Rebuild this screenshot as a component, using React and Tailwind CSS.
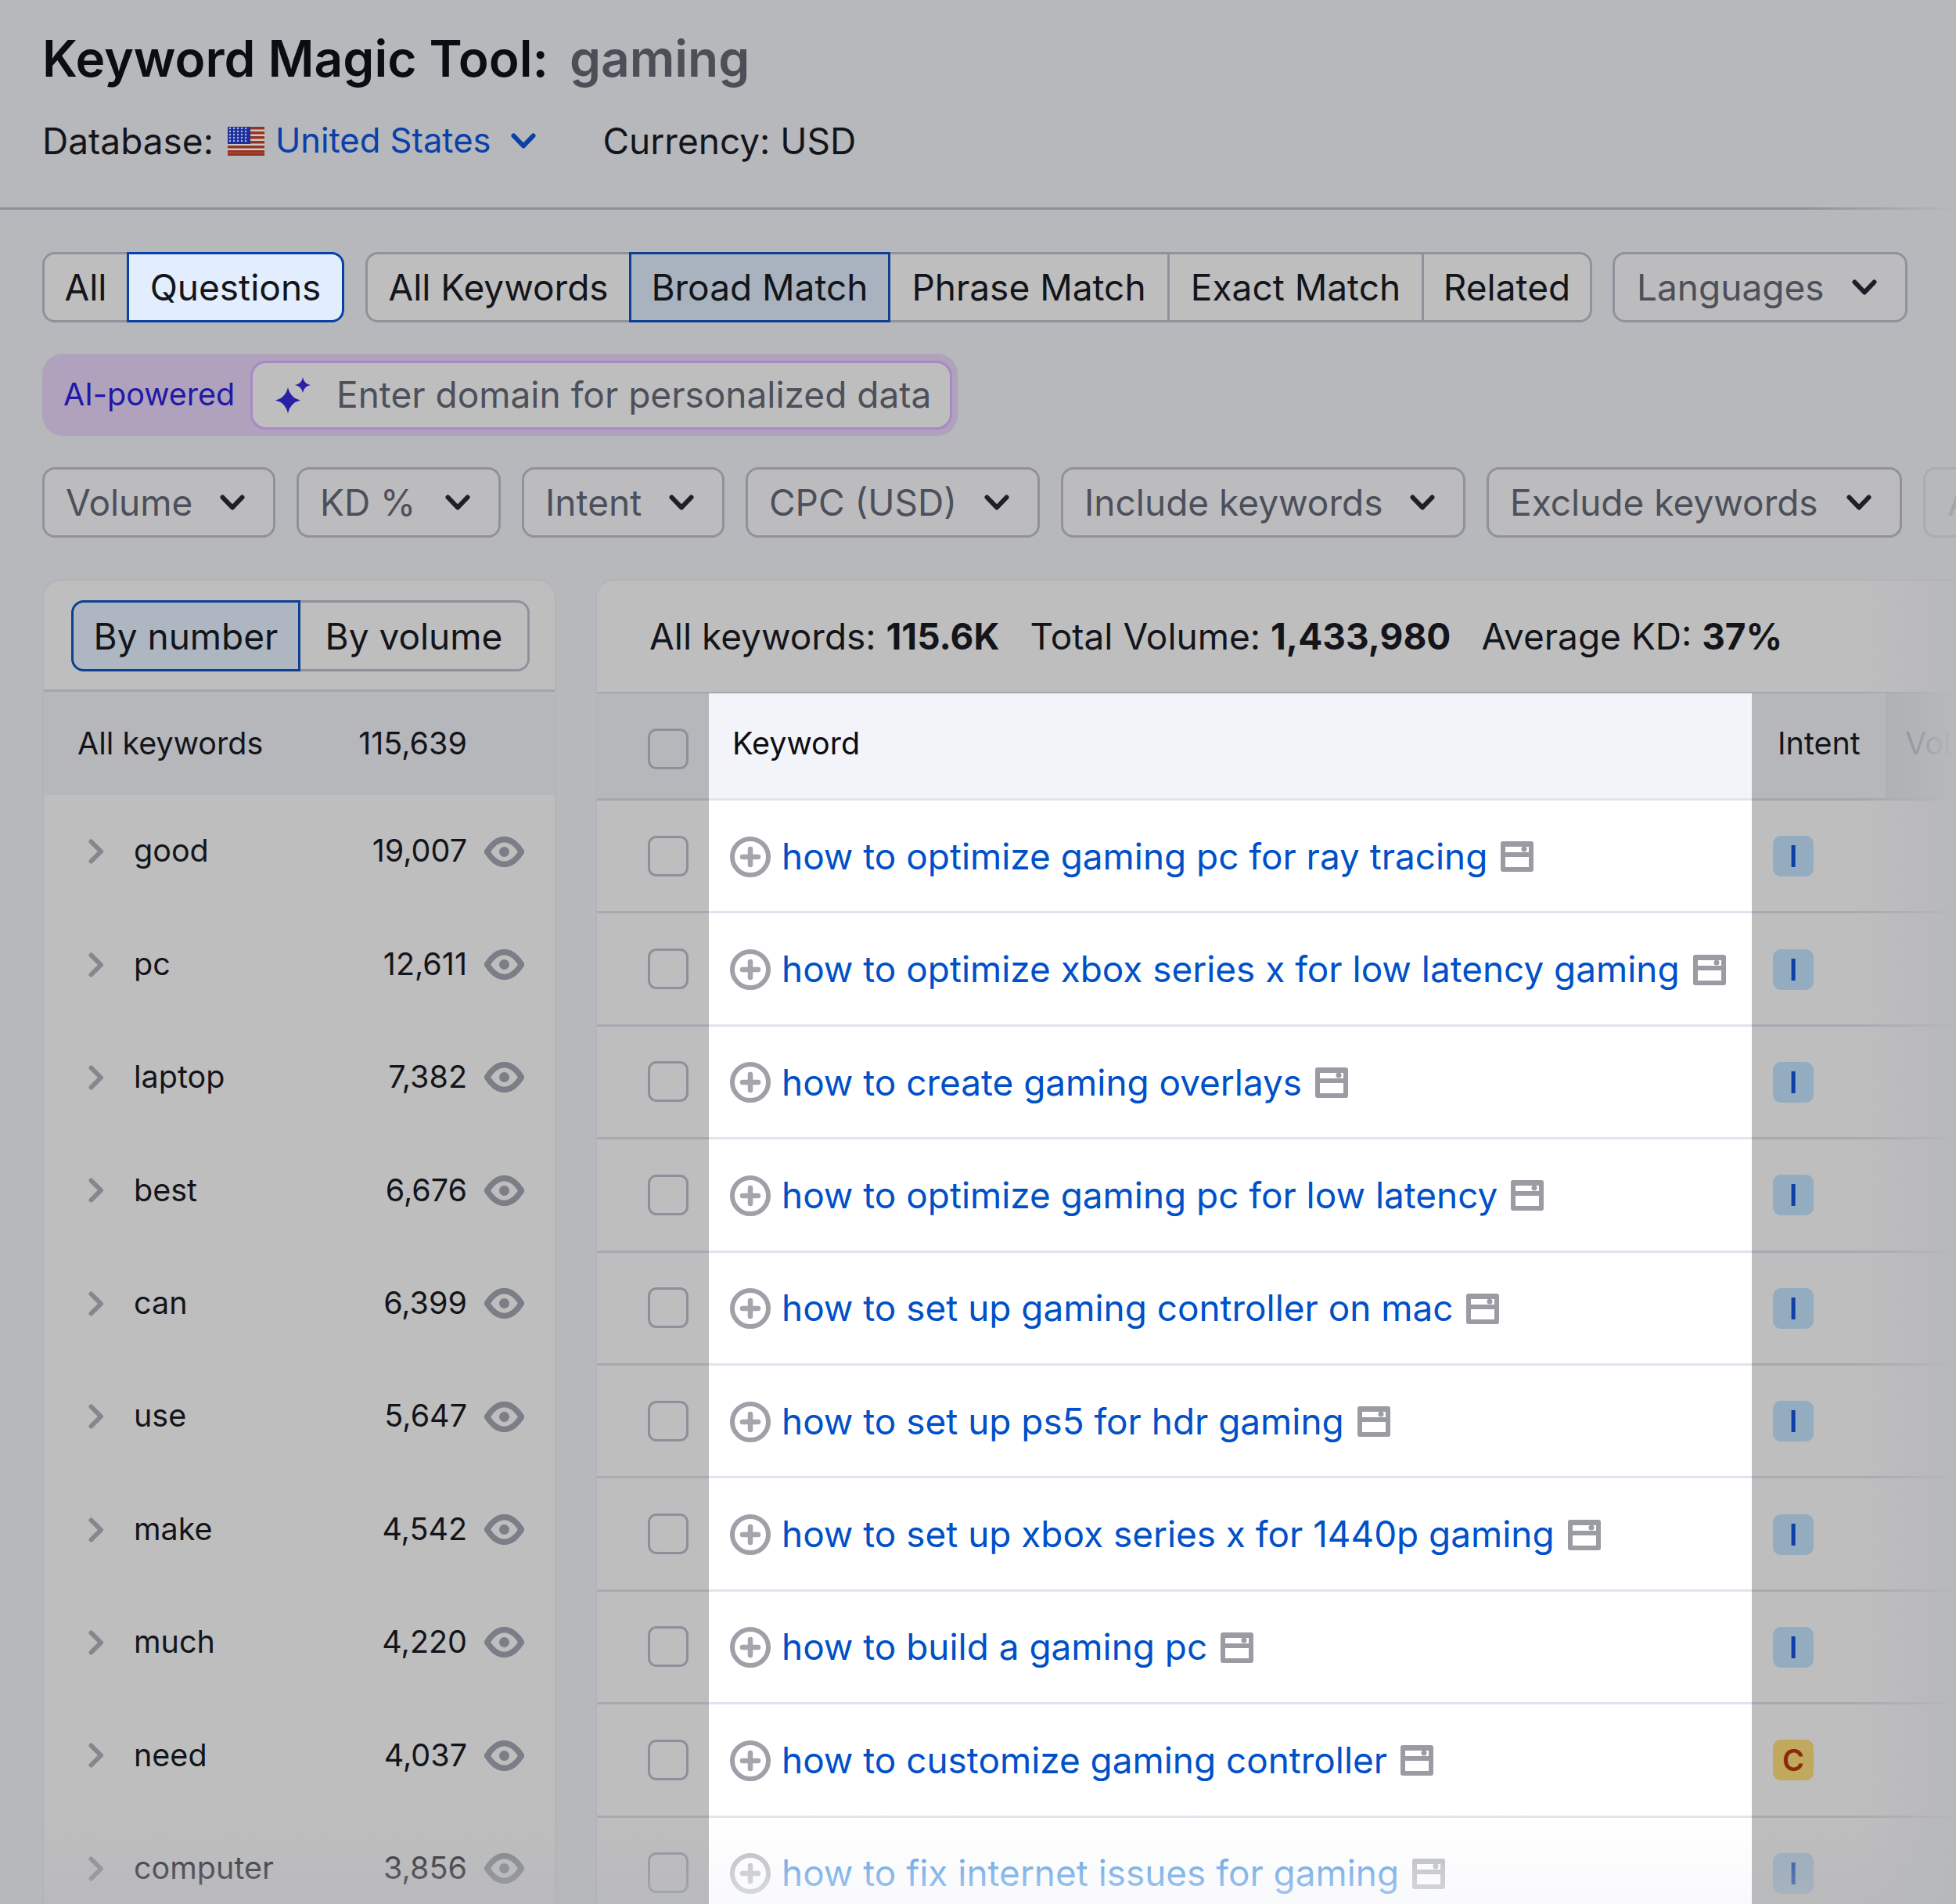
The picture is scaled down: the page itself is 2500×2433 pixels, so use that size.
import React from 'react';

const matchTabs = [
  { label: 'All Keywords', w: 'w-[337px]' },
  { label: 'Broad Match', w: 'w-[334px]', active: true },
  { label: 'Phrase Match', w: 'w-[354px]' },
  { label: 'Exact Match', w: 'w-[325px]' },
  { label: 'Related', w: 'w-[218px]' },
];

const filters = [
  { label: 'Volume', w: 'w-[298px]' },
  { label: 'KD %', w: 'w-[261px]' },
  { label: 'Intent', w: 'w-[259px]' },
  { label: 'CPC (USD)', w: 'w-[376px]' },
  { label: 'Include keywords', w: 'w-[517px]' },
  { label: 'Exclude keywords', w: 'w-[531px]' },
];

const groups = [
  ['good', '19,007'],
  ['pc', '12,611'],
  ['laptop', '7,382'],
  ['best', '6,676'],
  ['can', '6,399'],
  ['use', '5,647'],
  ['make', '4,542'],
  ['much', '4,220'],
  ['need', '4,037'],
  ['computer', '3,856'],
];

const keywords = [
  ['how to optimize gaming pc for ray tracing', 'I'],
  ['how to optimize xbox series x for low latency gaming', 'I'],
  ['how to create gaming overlays', 'I'],
  ['how to optimize gaming pc for low latency', 'I'],
  ['how to set up gaming controller on mac', 'I'],
  ['how to set up ps5 for hdr gaming', 'I'],
  ['how to set up xbox series x for 1440p gaming', 'I'],
  ['how to build a gaming pc', 'I'],
  ['how to customize gaming controller', 'C'],
  ['how to fix internet issues for gaming', 'I'],
];

const ChevronDown = ({ className = 'text-[#1e1f28]' }) => (
  <svg width="32" height="20" viewBox="0 0 32 20" fill="none" className={className}>
    <path d="M3.5 3.5 16 16.5 28.5 3.5" stroke="currentColor" strokeWidth="6" strokeLinecap="round" strokeLinejoin="round" />
  </svg>
);

const ChevronRight = () => (
  <svg width="21" height="32" viewBox="0 0 21 32" fill="none" className="shrink-0">
    <path d="M4.5 3.5 17 16 4.5 28.5" stroke="#85878f" strokeWidth="6" strokeLinecap="round" strokeLinejoin="round" />
  </svg>
);

const Eye = () => (
  <svg width="51" height="39" viewBox="0 0 51 39" fill="none" className="shrink-0">
    <path d="M3.5 19.5C11 7.5 18 3.5 25.5 3.5S40 7.5 47.5 19.5C40 31.5 33 35.5 25.5 35.5S11 31.5 3.5 19.5Z" stroke="#7b7d87" strokeWidth="7.5" />
    <circle cx="25.5" cy="19.5" r="6.5" fill="#7b7d87" />
  </svg>
);

const PlusCircle = () => (
  <svg width="52" height="52" viewBox="0 0 52 52" fill="none" className="shrink-0">
    <circle cx="26" cy="26" r="23" stroke="#a0a1a8" strokeWidth="6" />
    <path d="M16 26H36M26 16V36" stroke="#a4a5ad" strokeWidth="6.5" strokeLinecap="round" />
  </svg>
);

const SerpIcon = () => (
  <svg width="42" height="39" viewBox="0 0 42 39" className="shrink-0">
    <rect width="42" height="39" rx="3" fill="#9b9ca3" />
    <rect x="6" y="7" width="30" height="7" fill="#fff" />
    <rect x="6" y="20" width="30" height="13" fill="#fff" />
    <circle cx="30" cy="10" r="3.5" fill="#9b9ca3" />
  </svg>
);

const Flag = () => (
  <svg width="47" height="37" viewBox="0 0 47 37" className="shrink-0">
    <rect width="47" height="37" fill="#c9c9cc" />
    {[0, 6, 12, 18, 24, 30].map((y) => (
      <rect key={y} y={y} width="47" height="3.5" fill="#98331f" />
    ))}
    <rect y="33.5" width="47" height="3.5" fill="#98331f" />
    <rect width="29" height="22" fill="#1c2f9c" />
    {[2, 6, 10, 14, 18].map((y) =>
      [3, 8, 13, 18, 23].map((x) => (
        <circle key={x + '-' + y} cx={x} cy={y} r="1.2" fill="#b9bdd8" />
      ))
    )}
  </svg>
);

const Sparkles = () => (
  <svg width="46" height="46" viewBox="0 0 46 46" className="shrink-0" fill="#2a1fa8">
    <path d="M16 13Q19 26.5 32 29.5Q19 32.5 16 46Q13 32.5 0 29.5Q13 26.5 16 13Z" />
    <path d="M35 0Q36.5 8.5 45 10Q36.5 11.5 35 20Q33.5 11.5 25 10Q33.5 8.5 35 0Z" />
  </svg>
);

const Checkbox = () => (
  <div className="w-[52px] h-[52px] rounded-[11px] border-[3.5px] border-[#8d909a] shrink-0" />
);

const App = () => {
  return (
    <div className="relative w-[2500px] h-[2433px] overflow-hidden bg-[#b7b8bc] font-[Inter,sans-serif] text-[#14151b]">
      {/* page title */}
      <div className="h-[265px] pl-[54px] pt-[33px]">
        <div className="flex items-center h-[84px] text-[64px] leading-none">
          <span className="font-semibold text-[#0c0d12]">Keyword Magic Tool:</span>
          <span className="ml-[27px] font-semibold text-[#4c4e58]">gaming</span>
        </div>
        <div className="flex items-center h-[60px] mt-[33px] text-[46px] leading-none">
          <span>Database:</span>
          <span className="ml-[18px]"><Flag /></span>
          <span className="ml-[14px] text-[43.5px] text-[#0a40a8]">United States</span>
          <ChevronDown className="ml-[25px] text-[#0a40a8]" />
          <span className="ml-[86px]">Currency: USD</span>
        </div>
      </div>
      <div className="h-[3px] bg-gradient-to-r from-[#8f9097] from-[92%] to-[#b7b8bc]" />

      {/* match type tabs */}
      <div className="flex items-start mt-[54px] pl-[54px] h-[90px] text-[46px] leading-none">
        <div className="flex h-full">
          <div className="w-[108px] flex items-center justify-center rounded-l-[16px] border-[3px] border-r-0 border-[#8f929b] bg-[#bebebe]">All</div>
          <div className="w-[278px] flex items-center justify-center rounded-r-[16px] border-[3px] border-[#0a3fa8] bg-[#e2edfd]">Questions</div>
        </div>
        <div className="flex h-full ml-[27px]">
          {matchTabs.map((tab, i) => (
            <div
              key={tab.label}
              className={
                tab.w +
                ' flex items-center justify-center border-y-[3px] ' +
                (tab.active
                  ? 'border-x-[3px] border-[#0f3f94] bg-[#a8b3bf]'
                  : 'border-[#8f929b] bg-[#bebebe] ' +
                    (i === 0 ? 'border-l-[3px] rounded-l-[16px] ' : '') +
                    (i === matchTabs.length - 1 ? 'border-x-[3px] rounded-r-[16px] ' : '') +
                    (i === 3 ? 'border-l-[3px]' : ''))
              }
            >
              {tab.label}
            </div>
          ))}
        </div>
        <div className="flex items-center justify-between h-full w-[377px] ml-[26px] pl-[28px] pr-[36px] rounded-[16px] border-[3px] border-[#8f929b] bg-[#bcbcbe] text-[#4d505b]">
          <span>Languages</span>
          <ChevronDown />
        </div>
      </div>

      {/* AI row */}
      <div className="flex items-center w-[1170px] h-[105px] ml-[54px] mt-[40px] pl-[27px] pr-[7px] rounded-[26px] bg-[#b0a2bd]">
        <span className="w-[239px] shrink-0 text-[39.5px] leading-none text-[#2018a6]">AI-powered</span>
        <div className="flex items-center flex-1 h-[88px] pl-[29px] rounded-[20px] border-[3px] border-[#a988c8] bg-[#bebebe] text-[46px] leading-none text-[#4d505b]">
          <Sparkles />
          <span className="ml-[32px] mb-[2px]">Enter domain for personalized data</span>
        </div>
      </div>

      {/* filters */}
      <div className="flex mt-[40px] pl-[54px] gap-[27px] h-[90px] text-[46px] leading-none text-[#4d505b]">
        {filters.map((f) => (
          <div key={f.label} className={f.w + ' shrink-0 flex items-center justify-between pl-[27px] pr-[36px] rounded-[16px] border-[3px] border-[#8f929b] bg-[#bcbcbe]'}>
            <span>{f.label}</span>
            <ChevronDown />
          </div>
        ))}
        <div className="w-[200px] shrink-0 flex items-center pl-[28px] rounded-[16px] border-[3px] border-[#abacb1] text-[#a5a6ab]">
          Advanced
        </div>
      </div>

      {/* panels */}
      <div className="flex items-start gap-[50px] mt-[53px] pl-[54px]">
        <div className="relative w-[657px] h-[1693px] shrink-0 rounded-t-[24px] border-x-[2px] border-t-[2px] border-[#b3b4b7] bg-[#bebebe] overflow-hidden">
          <div className="h-[142px] pt-[25px] pl-[35px] border-b-[3px] border-[#a5a6ac]">
            <div className="flex h-[91px] w-[586px] text-[46px] leading-none">
              <div className="w-[293px] flex items-center justify-center rounded-l-[16px] border-[3px] border-[#0f3f94] bg-[#adb6c1]">By number</div>
              <div className="flex-1 flex items-center justify-center rounded-r-[16px] border-[3px] border-l-0 border-[#8f929b]">By volume</div>
            </div>
          </div>
          <div className="flex items-center h-[132px] bg-[#b6b7bb] pl-[43px] pt-[2px] text-[39.5px] leading-none">
            <span className="w-[498px] flex justify-between">
              <span>All keywords</span>
              <span>115,639</span>
            </span>
          </div>
          {groups.map(([name, count]) => (
            <div key={name} className="flex items-center h-[144.4px] pl-[56px] text-[39.5px] leading-none">
              <ChevronRight />
              <span className="ml-[38px] w-[426px] flex justify-between">
                <span>{name}</span>
                <span>{count}</span>
              </span>
              <span className="ml-[22px]"><Eye /></span>
            </div>
          ))}
          <div className="absolute inset-x-0 bottom-0 h-[120px] bg-gradient-to-b from-[#b6b7bb00] to-[#b6b7bb99]" />
        </div>

        <div className="relative flex-1 h-[1693px] rounded-tl-[24px] border-l-[2px] border-t-[2px] border-[#b3b4b7] bg-[#bebebe] overflow-hidden">
          <div className="flex items-center h-[144px] pl-[67px] text-[46px] leading-none border-b-[2px] border-[#a5a6ac]">
            <span>All keywords: <b className="font-bold">115.6K</b></span>
            <span className="ml-[39px]">Total Volume: <b className="font-bold">1,433,980</b></span>
            <span className="ml-[39px]">Average KD: <b className="font-bold">37%</b></span>
          </div>

          {/* header row */}
          <div className="flex h-[137px] text-[39.5px] leading-none">
            <div className="w-[143px] shrink-0 flex items-center pl-[65px] bg-[#b6b7bb] border-b-[3px] border-[#a5a6ac]">
              <span className="mt-[8px]"><Checkbox /></span>
            </div>
            <div className="w-[1333px] shrink-0 flex items-center pl-[30px] pb-[5px] bg-[#f3f4f9] border-b-[3px] border-[#e2e3ee] text-[#0c0d12]">Keyword</div>
            <div className="w-[171px] shrink-0 flex items-center pl-[33px] pb-[5px] bg-[#b6b7bb] border-b-[3px] border-[#a5a6ac]">Intent</div>
            <div className="flex-1 flex items-center pl-[25px] pb-[5px] bg-[#acadb1] border-b-[3px] border-[#a5a6ac] text-[#6f727b]">Volume</div>
          </div>

          {keywords.map(([text, intent], i) => (
            <div key={text} className="flex h-[144.4px]">
              <div className="w-[143px] shrink-0 flex items-center pl-[65px] border-b-[3px] border-[#a8a9b1]">
                <Checkbox />
              </div>
              <div className="w-[1333px] shrink-0 flex items-center pl-[27px] pt-[2px] bg-white border-b-[3px] border-[#e2e3ee]">
                <PlusCircle />
                <span className={'ml-[14px] text-[45.9px] leading-none ' + (i === keywords.length - 1 ? 'text-[#0a70d8]' : 'text-[#0050c8]')}>{text}</span>
                <span className="ml-[17px]"><SerpIcon /></span>
              </div>
              <div className="flex-1 flex items-center pl-[27px] pt-[1px] border-b-[3px] border-[#a8a9b1]">
                <span
                  className={
                    'flex items-center justify-center w-[52px] h-[52px] rounded-[10px] text-[38px] leading-none font-semibold ' +
                    (intent === 'C' ? 'bg-[#c0a85c] text-[#8a2a0c]' : 'bg-[#94acc0] text-[#0f3fa8]')
                  }
                >
                  {intent}
                </span>
              </div>
            </div>
          ))}

          {/* fades at the picture's edges */}
          <div className="absolute left-0 bottom-0 w-[143px] h-[120px] bg-gradient-to-b from-[#b6b7bb00] to-[#b6b7bb99]" />
          <div className="absolute left-[143px] bottom-0 w-[1333px] h-[120px] bg-gradient-to-b from-[#ffffff00] via-[#f8f9fb70] to-[#f6f7fab0]" />
          <div className="absolute left-[1476px] right-0 bottom-0 h-[120px] bg-gradient-to-b from-[#b6b7bb00] to-[#b6b7bb99]" />
          <div className="absolute right-0 top-0 bottom-0 w-[130px] bg-gradient-to-r from-[#b7b8bc00] to-[#b7b8bc]" />
        </div>
      </div>
    </div>
  );
};

export default App;
